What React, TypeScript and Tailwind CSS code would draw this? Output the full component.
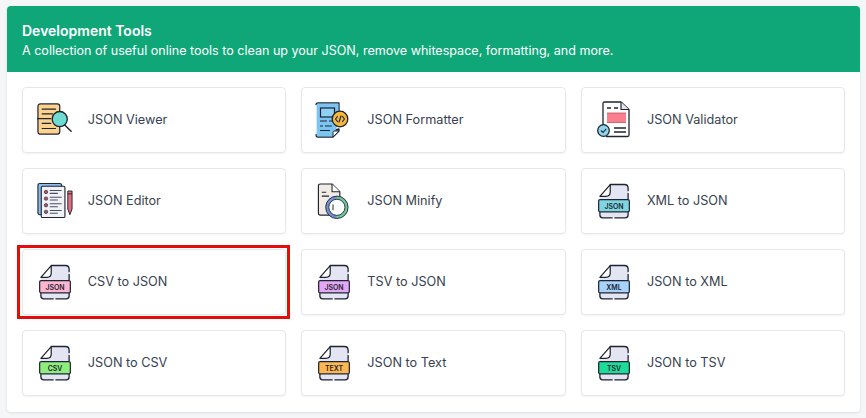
const ink = '#1f2430';

function FileIcon({ label, color }: { label: string; color: string }) {
  return (
    <svg width="32" height="36" viewBox="0 0 34 38" fill="none" className="ml-[2px]">
      <path d="M2 14 L13 1.5 H28 Q32 1.5 32 5.5 V34 Q32 37 29 37 H5 Q2 37 2 34 Z" fill="#e4e5f2" />
      <path d="M2 14 L13 1.5 V9.5 Q13 14 8.5 14 Z" fill="#fff" stroke={ink} strokeWidth="1.3" strokeLinejoin="round" />
      <path d="M13 1.5 H28 Q32 1.5 32 5.5 V8 M32 11 V17 M2 31 V34 Q2 37 5 37 H15 M18 37 H29 Q32 37 32 34 V31" stroke={ink} strokeWidth="1.4" strokeLinecap="round" />
      <rect x="0.7" y="17.5" width="32.6" height="13" rx="1.5" fill={color} stroke={ink} strokeWidth="1.3" />
      <text x="17" y="27" textAnchor="middle" fontSize="7.4" fontWeight="600" fill={ink} fontFamily="Inter, sans-serif">{label}</text>
    </svg>
  );
}

function ViewerIcon() {
  return (
    <svg width="38" height="36" viewBox="0 0 38 36" fill="none" className="ml-[2px]">
      <rect x="1" y="1" width="23" height="32" rx="2.5" fill="#fbd38d" stroke={ink} strokeWidth="1.3" />
      <path d="M5 6.5 H20 M5 11.5 H17 M0 16.5 H15 M5 21.5 H15 M5 27 H20" stroke={ink} strokeWidth="1.2" />
      <path d="M29 23 L36 30" stroke={ink} strokeWidth="1.5" strokeLinecap="round" />
      <circle cx="24" cy="17" r="8" fill="#6fdcd3" stroke={ink} strokeWidth="1.4" />
    </svg>
  );
}

function FormatterIcon() {
  return (
    <svg width="34" height="36" viewBox="0 0 34 36" fill="none" className="mr-[3px]">
      <path d="M1 3 Q1 1 3 1 H24 V17 M24 27 V29 L18 35 H3 Q1 35 1 33 Z" fill="#7cc4f2" stroke={ink} strokeWidth="1.3" strokeLinejoin="round" />
      <path d="M1.6 3 Q1.6 1.6 3 1.6 H23.4 V20 L20 30 L18 34.4 H3 Q1.6 34.4 1.6 33 Z" fill="#7cc4f2" />
      <path d="M24 29 L18 35 V30.5 Q18 29 19.5 29 Z" fill="#fff" stroke={ink} strokeWidth="1" strokeLinejoin="round" />
      <rect x="5.5" y="6" width="14" height="9" fill="#8fd0f5" stroke={ink} strokeWidth="1.2" />
      <path d="M5 19 H12 M14 19 H17 M5 24 H8 M10 24 H17 M5 28.5 H15" stroke={ink} strokeWidth="1.2" />
      <circle cx="25" cy="17" r="7.8" fill="#f5b83d" stroke={ink} strokeWidth="1.3" />
      <path d="M22.5 14.5 L20.5 17 L22.5 19.5 M27.5 14.5 L29.5 17 L27.5 19.5 M26 14 L24 20" stroke={ink} strokeWidth="1.2" strokeLinecap="round" strokeLinejoin="round" />
    </svg>
  );
}

function ValidatorIcon() {
  return (
    <svg width="34" height="37" viewBox="0 0 34 37" fill="none">
      <path d="M7 24 V2.5 Q7 1 8.5 1 H25 L33 8.5 V34 Q33 35.5 31.5 35.5 H10" fill="#fff" stroke={ink} strokeWidth="1.3" strokeLinejoin="round" />
      <path d="M25 1 V8.5 H33" fill="#e4e5f2" stroke={ink} strokeWidth="1.2" strokeLinejoin="round" />
      <path d="M11 7 H15 M18 7 H22" stroke={ink} strokeWidth="1.3" />
      <rect x="11" y="12" width="19" height="9.5" fill="#f77f8e" />
      <path d="M11 12 H30 M11 21.5 H30" stroke="#c9515f" strokeWidth="0.8" />
      <path d="M18 27 H30 M18 31 H30" stroke={ink} strokeWidth="1.3" />
      <circle cx="7.5" cy="29.5" r="5.8" fill="#8ed6ee" stroke={ink} strokeWidth="1.3" />
      <path d="M5 29.5 L7 31.5 L10.2 27.8" stroke={ink} strokeWidth="1.1" />
    </svg>
  );
}

function EditorIcon() {
  return (
    <svg width="38" height="37" viewBox="0 0 38 38" fill="none" className="ml-[2px]">
      <rect x="1" y="1" width="25" height="33" rx="2" fill="#8dbdf0" stroke={ink} strokeWidth="1.2" />
      <rect x="4.5" y="4" width="25" height="33" rx="1.5" fill="#f1f1f8" stroke={ink} strokeWidth="1.2" />
      <circle cx="9.5" cy="10" r="1.8" fill="#c2556b" stroke={ink} strokeWidth="0.7" />
      <circle cx="9.5" cy="17" r="1.8" fill="#c2556b" stroke={ink} strokeWidth="0.7" />
      <circle cx="9.5" cy="24" r="1.8" fill="#c2556b" stroke={ink} strokeWidth="0.7" />
      <circle cx="9.5" cy="31" r="1.8" fill="#c2556b" stroke={ink} strokeWidth="0.7" />
      <path d="M13.5 8.5 H26 M13.5 11.5 H22 M13.5 15.5 H26 M13.5 18.5 H22 M13.5 22.5 H26 M13.5 25.5 H22 M13.5 29.5 H26 M13.5 32.5 H22" stroke="#4b5060" strokeWidth="1.1" />
      <path d="M32.5 9 H37 V28 L34.7 34 L32.5 28 Z" fill="#e56d7f" stroke={ink} strokeWidth="1" strokeLinejoin="round" />
      <path d="M32.5 12 H37" stroke={ink} strokeWidth="1" />
    </svg>
  );
}

function MinifyIcon() {
  return (
    <svg width="32" height="36" viewBox="0 0 32 37" fill="none">
      <path d="M14 33 H3 Q1 33 1 31 V3 Q1 1 3 1 H15 L23 9 V16" fill="#f2ece6" />
      <path d="M14 33 H3 Q1 33 1 31 V3 Q1 1 3 1 H15 L23 9 V16" stroke={ink} strokeWidth="1.2" strokeLinejoin="round" />
      <path d="M15 1 V9 H23" fill="#fff" stroke={ink} strokeWidth="1.1" strokeLinejoin="round" />
      <path d="M4.5 9.5 H9 M4.5 13.5 H12" stroke={ink} strokeWidth="1.1" />
      <circle cx="20" cy="25" r="9" fill="#fff" />
      <path d="M20 15 A10 10 0 0 1 20 35" stroke="#6fc79a" strokeWidth="3.2" />
      <path d="M20 35 A10 10 0 0 1 20 15" stroke="#7191d6" strokeWidth="3.2" />
      <circle cx="20" cy="25" r="11.5" stroke={ink} strokeWidth="0.9" />
      <circle cx="20" cy="25" r="8.3" stroke={ink} strokeWidth="0.9" />
      <path d="M16 22 V28" stroke={ink} strokeWidth="1" />
    </svg>
  );
}

const tools = [
  { name: 'JSON Viewer', icon: <ViewerIcon /> },
  { name: 'JSON Formatter', icon: <FormatterIcon /> },
  { name: 'JSON Validator', icon: <ValidatorIcon /> },
  { name: 'JSON Editor', icon: <EditorIcon /> },
  { name: 'JSON Minify', icon: <MinifyIcon /> },
  { name: 'XML to JSON', icon: <FileIcon label="JSON" color="#7fd6e3" /> },
  { name: 'CSV to JSON', icon: <FileIcon label="JSON" color="#fdb5d0" />, marked: true },
  { name: 'TSV to JSON', icon: <FileIcon label="JSON" color="#e3a8f5" /> },
  { name: 'JSON to XML', icon: <FileIcon label="XML" color="#a6d2fb" /> },
  { name: 'JSON to CSV', icon: <FileIcon label="CSV" color="#8eed7c" /> },
  { name: 'JSON to Text', icon: <FileIcon label="TEXT" color="#fdb853" /> },
  { name: 'JSON to TSV', icon: <FileIcon label="TSV" color="#1edb97" /> },
];

export default function App() {
  return (
    <div className="h-[418px] w-[866px] overflow-hidden bg-[#f5f6f8] pt-[6px] pl-[7px] font-['Inter',sans-serif]">
      <div className="h-[405.5px] w-[853px] overflow-hidden rounded-[4px] bg-white shadow-[0_1px_3px_rgba(0,0,0,0.1)]">
        <div className="h-[66px] bg-[#10a778] px-[15px] pt-[15px] text-white">
          <h2 className="text-[14px] leading-[20px] font-semibold">Development Tools</h2>
          <p className="text-[12.55px] leading-[20px]">
            A collection of useful online tools to clean up your JSON, remove whitespace, formatting, and more.
          </p>
        </div>
        <div className="grid grid-cols-3 gap-x-[15.2px] gap-y-[15px] pt-[14.5px] pr-[14.7px] pl-[14.8px]">
          {tools.map((t) => (
            <div
              key={t.name}
              className="relative flex h-[66px] items-center rounded-[4px] border border-[#e5e7eb] bg-white pl-[12px] shadow-[0_1px_2px_rgba(0,0,0,0.05)]"
            >
              <div className="flex w-[38px] justify-center">{t.icon}</div>
              <span className="ml-[15px] text-[12.7px] text-[#374151]">{t.name}</span>
              {t.marked && (
                <div className="absolute -top-[5px] -right-[5px] -bottom-[5px] -left-[6px] border-[3px] border-[#e50c0c]" />
              )}
            </div>
          ))}
        </div>
      </div>
    </div>
  );
}
